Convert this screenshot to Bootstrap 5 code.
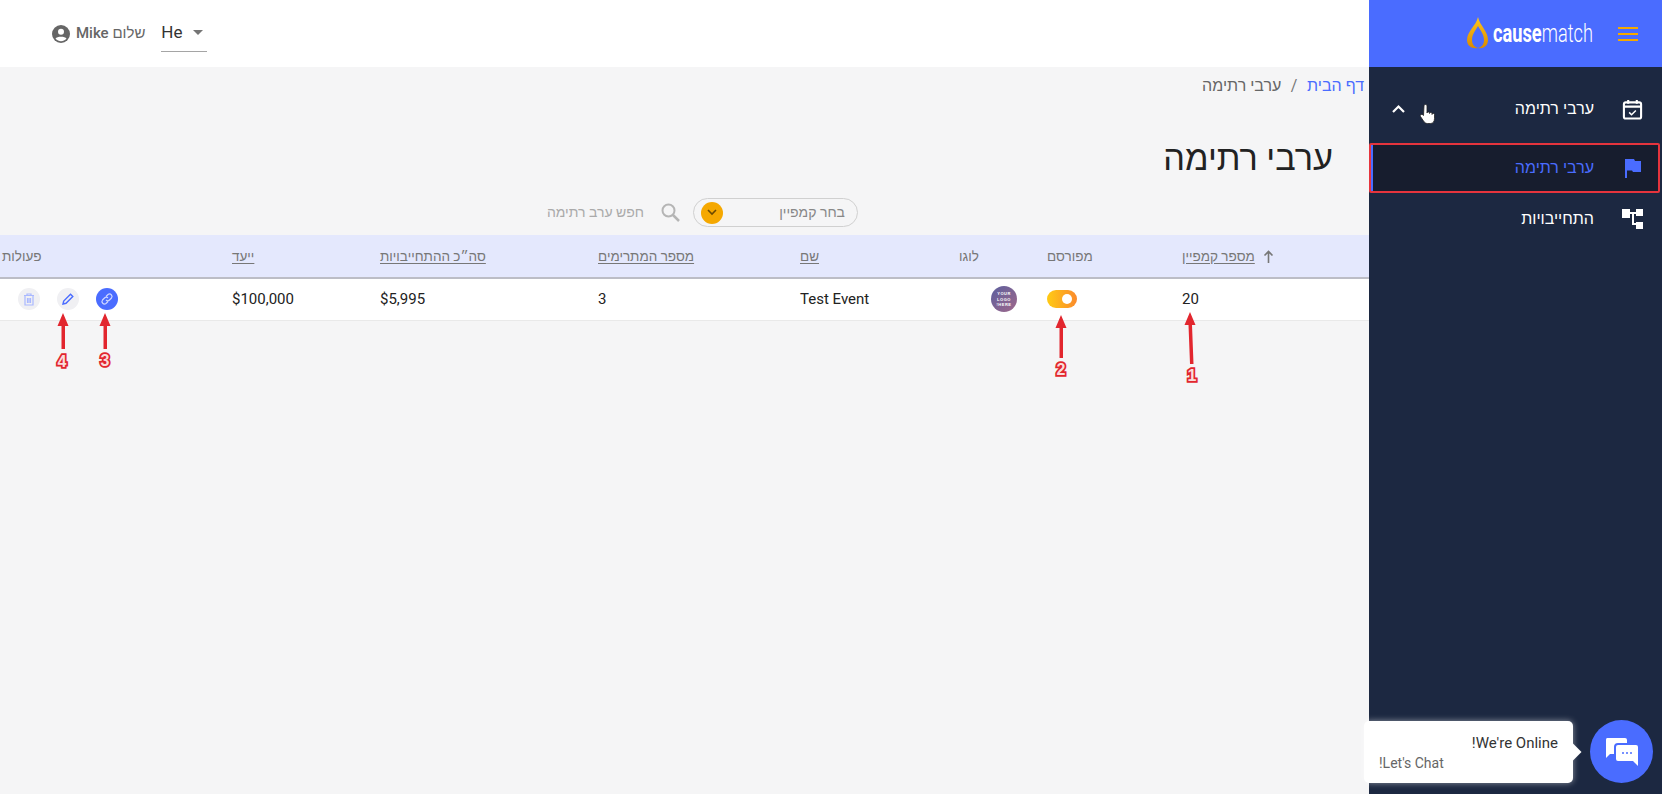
<!DOCTYPE html>
<html lang="he" dir="rtl">
<head>
    <meta charset="UTF-8">
    <title>ערבי רתימה</title>
    <link href="https://cdn.jsdelivr.net/npm/bootstrap@5.3.0/dist/css/bootstrap.min.css" rel="stylesheet">
    <style>
        body { background: #f5f5f6; font-family: Roboto, "Liberation Sans", sans-serif; height: 794px; overflow: hidden; position: relative; }
        .side-bar { width: 293px; height: 794px; background: #1c2841; flex-shrink: 0; }
        .side-head { height: 67px; background: #4a6cff; padding-right: 24px; gap: 25px; }
        .burger { width: 20px; }
        .burger i { display: block; height: 2px; background: #f5a800; margin: 4px 0; }
        .brand-logo { width: 126px; gap: 5px; }
        .brand-word { width: 100px; color: #fff; font-size: 25px; line-height: 30px; font-weight: 300; white-space: nowrap; transform: scaleX(.73); transform-origin: left center; }
        .brand-word b { font-weight: 700; }
        .side-nav { padding-top: 18px; }
        .side-nav .nav-link { height: 48px; color: #fff; font-size: 16px; font-weight: 500; padding: 0 19px 0 0; gap: 28px; }
        .side-nav .nav-link svg { width: 21px; height: 21px; flex-shrink: 0; }
        .side-nav .on-row { color: #4a6cff; background: #171d2e; height: 50px; margin: 10px 2px 2px 0; border: 2px solid #e5343d; border-radius: 2px; box-shadow: inset 2px 0 0 #4a6cff; padding-right: 15px; }
        .nav-chev { margin-right: auto; margin-left: 19px; }
        .main-area { width: 1369px; }
        .top-bar { height: 67px; background: #fff; padding-left: 52px; gap: 16px; }
        .lang-pick { width: 46px; height: 34px; border-bottom: 1px solid #a5a5a5; margin-top: 2px; color: #333; font-size: 17px; padding-bottom: 3px; }
        .lang-caret { width: 0; height: 0; border-left: 5px solid transparent; border-right: 5px solid transparent; border-top: 5px solid #757575; }
        .user-line { color: #666; font-size: 15px; gap: 6px; }
        .user-line b { font-weight: 500; }
        .crumbs { padding: 10px 5px 0 0; font-size: 16px; line-height: 18px; }
        .crumbs .breadcrumb { margin: 0; --bs-breadcrumb-divider-color: #777; }
        .crumbs a { color: #4a6cff; text-decoration: none; }
        .crumbs .breadcrumb-item.active { color: #666; }
        .crumbs .breadcrumb-item + .breadcrumb-item { padding-left: 0; padding-right: .6rem; }
        .crumbs .breadcrumb-item + .breadcrumb-item::before { float: right; padding-right: 0; padding-left: .6rem; }
        .page-title { font-size: 34.3px; font-weight: 400; color: #222; line-height: 44px; margin: 41px 36px 0 0; }
        .tools { padding: 18px 511px 0 0; height: 55px; gap: 13px; }
        .camp-pick { width: 165px; height: 29px; border: 1.5px solid #d0d0d0; border-radius: 15px; color: #888; font-size: 14px; padding: 0 12px 0 7px; }
        .camp-arrow { width: 22px; height: 22px; border-radius: 50%; background: #f5a800; }
        .find-box { color: #aaa; font-size: 14px; gap: 17px; }
        .event-table { width: 1369px; table-layout: fixed; border-collapse: collapse; margin: 0; }
        .event-table th { height: 43px; background: #e4e8fd; border-bottom: 2px solid #bcbdc6; color: #777; font-size: 13.5px; font-weight: 500; text-align: left; padding: 0; white-space: nowrap; }
        .event-table th:last-child { padding-left: 2px; }
        .event-table th u { text-underline-offset: 2px; }
        .event-table td { height: 42px; background: #fff; border-bottom: 1px solid #e9e9e9; color: #222; font-size: 15px; text-align: left; padding: 0; vertical-align: middle; }
        .sort-mark { margin-left: 8px; vertical-align: -2px; }
        .pub-switch { display: block; width: 30px; height: 18px; margin-right: auto; border-radius: 9px; background: linear-gradient(90deg, #ffcb14, #fb8a2c); position: relative; }
        .pub-switch i { position: absolute; width: 10px; height: 10px; border-radius: 50%; background: #fff; left: 15px; top: 4px; }
        .logo-cell svg { display: block; margin-left: 32px; margin-right: auto; }
        .act-row { gap: 17px; padding-left: 18px; }
        .act-btn { width: 22px; height: 22px; border-radius: 50%; background: #f0f0f3; }
        .act-btn.main-act { background: #4a6cff; }
        .marks { position: absolute; left: 0; top: 0; width: 1662px; height: 794px; pointer-events: none; direction: ltr; }
        .marks text { font-family: "Liberation Sans", sans-serif; font-size: 16px; font-weight: 700; fill: #f9dcdc; stroke: #e2262e; stroke-width: 3.5px; paint-order: stroke; text-anchor: middle; }
        .chat-tip { position: absolute; left: 1364px; top: 721px; width: 209px; height: 62px; background: #fff; border-radius: 5px; box-shadow: 0 0 6px rgba(255,255,255,.5); padding: 12px 15px; }
        .chat-tip::after { content: ""; position: absolute; right: -6px; top: 25px; width: 12px; height: 12px; background: #fff; transform: rotate(45deg); }
        .chat-title { color: #333; font-size: 15px; line-height: 20px; }
        .chat-sub { color: #666; font-size: 14px; line-height: 20px; margin-top: 0; }
        .chat-ball { position: absolute; left: 1590px; top: 720px; width: 63px; height: 63px; border-radius: 50%; background: #4a6cff; }
    </style>
</head>
<body class="d-flex">
<aside class="side-bar">
    <div class="side-head d-flex align-items-center">
        <div class="burger"><i></i><i></i><i></i></div>
        <div class="brand-logo d-flex align-items-center" dir="ltr">
            <svg width="21" height="40" viewBox="0 0 21 40" class="flex-shrink-0">
                <defs><linearGradient id="flameFill" x1="0" y1="0" x2="0" y2="1"><stop offset="0" stop-color="#ffc61a"/><stop offset="1" stop-color="#d98a00"/></linearGradient></defs>
                <path d="M11 3 C13 12 21 17 21 26 C21 32 16 35 11 34 C15 33 17 30 17 26 C17 20 13 16 11 12 C9 16 5 20 5 26 C5 30 7 33 11 34 C5 35 0 32 0 26 C0 17 9 12 11 3 Z" fill="url(#flameFill)"/>
            </svg>
            <div class="brand-word"><b>cause</b>match</div>
        </div>
    </div>
    <nav class="nav flex-column side-nav">
        <a class="nav-link d-flex align-items-center" href="#">
            <svg viewBox="0 0 21 22" fill="none" stroke="#fff" stroke-width="2.200"><rect x="1.500" y="3.500" width="18" height="17" rx="2"/><path d="M1.500 8h18M6 1v4M15 1v4"/><path d="M7 14l2.500 2.500L14 12" stroke-width="1.600"/></svg>
            <span>ערבי רתימה</span>
            <svg class="nav-chev" viewBox="0 0 21 21" fill="none" stroke="#fff" stroke-width="2.200"><path d="M5 13l5.500-5.500L16 13"/></svg>
        </a>
        <a class="nav-link on-row d-flex align-items-center" href="#">
            <svg viewBox="0 0 21 21" fill="#4a6cff"><path d="M3 1h9l1 2h6v11h-8l-1-1.500H5V20H3Z"/></svg>
            <span>ערבי רתימה</span>
        </a>
        <a class="nav-link d-flex align-items-center" href="#">
            <svg viewBox="0 0 21 21" fill="#fff"><path d="M0 0h8v9H0ZM14 0h7v7h-7ZM14 13h7v7h-7ZM8 3h6v2h-2v9h2v2h-4V5H8Z"/></svg>
            <span>התחייבויות</span>
        </a>
    </nav>
</aside>
<main class="main-area">
    <header class="top-bar d-flex align-items-center justify-content-end">
        <div class="lang-pick d-flex align-items-center justify-content-between" dir="ltr"><span>He</span><span class="lang-caret me-1"></span></div>
        <div class="user-line d-flex align-items-center">
            <span>שלום <b>Mike</b></span>
            <svg width="18" height="18" viewBox="0 0 18 18"><circle cx="9" cy="9" r="9" fill="#666"/><circle cx="9" cy="6.700" r="3" fill="#fff"/><path d="M3.500 13.500C5 11.300 13 11.300 14.500 13.500C13 15.500 11 16.200 9 16.200S5 15.500 3.500 13.500Z" fill="#fff"/></svg>
        </div>
    </header>
    <div class="crumbs">
        <ol class="breadcrumb">
            <li class="breadcrumb-item"><a href="#">דף הבית</a></li>
            <li class="breadcrumb-item active">ערבי רתימה</li>
        </ol>
    </div>
    <h1 class="page-title">ערבי רתימה</h1>
    <div class="tools d-flex align-items-start">
        <div class="camp-pick d-flex align-items-center justify-content-between">
            <span>בחר קמפיין</span>
            <span class="camp-arrow d-flex align-items-center justify-content-center"><svg width="10" height="7" viewBox="0 0 10 7" fill="none" stroke="#6b4a00" stroke-width="1.600"><path d="M1 1l4 4 4-4"/></svg></span>
        </div>
        <div class="find-box d-flex align-items-center pt-1">
            <svg width="19" height="19" viewBox="0 0 19 19" fill="none" stroke="#b5b5b5" stroke-width="2"><circle cx="7.500" cy="7.500" r="6"/><path d="M12 12l6 6" stroke-width="2.500"/></svg>
            <span>חפש ערב רתימה</span>
        </div>
    </div>
    <table class="event-table">
        <colgroup>
            <col style="width:187px"><col style="width:135px"><col style="width:88px"><col style="width:159px"><col style="width:202px"><col style="width:218px"><col style="width:148px"><col style="width:232px">
        </colgroup>
        <thead>
            <tr>
                <th><svg class="sort-mark" width="11" height="13" viewBox="0 0 11 13" fill="none" stroke="#777" stroke-width="1.600"><path d="M5.500 13V2M1.500 5.500l4-4 4 4"/></svg><u>מספר קמפיין</u></th>
                <th>מפורסם</th>
                <th>לוגו</th>
                <th><u>שם</u></th>
                <th><u>מספר המתרימים</u></th>
                <th><u>סה״כ ההתחייבויות</u></th>
                <th><u>ייעד</u></th>
                <th>פעולות</th>
            </tr>
        </thead>
        <tbody>
            <tr>
                <td>20</td>
                <td><span class="pub-switch"><i></i></span></td>
                <td class="logo-cell">
                    <svg width="26" height="26" viewBox="0 0 26 26">
                        <defs><linearGradient id="logoFill" x1="0" y1="0" x2="1" y2="1"><stop offset="0" stop-color="#5b5f9e"/><stop offset="1" stop-color="#a0688a"/></linearGradient></defs>
                        <circle cx="13" cy="13" r="13" fill="url(#logoFill)"/>
                        <g font-size="4" font-weight="700" fill="#fff" text-anchor="middle" font-family="Liberation Sans" letter-spacing=".5">
                            <text x="13" y="9">YOUR</text>
                            <text x="13" y="14.500">LOGO</text>
                            <text x="13" y="20">HERE!</text>
                        </g>
                    </svg>
                </td>
                <td dir="ltr">Test Event</td>
                <td>3</td>
                <td>$5,995</td>
                <td>$100,000</td>
                <td>
                    <div class="act-row d-flex" dir="ltr">
                        <span class="act-btn d-flex align-items-center justify-content-center">
                            <svg width="12" height="13" viewBox="0 0 12 13" fill="none" stroke="#a9b8ff" stroke-width="1.200"><path d="M1 2.500h10M4 2.500V1h4v1.500M2 2.500v9.500h8V2.500M4.500 5v5M6 5v5M7.500 5v5"/></svg>
                        </span>
                        <span class="act-btn d-flex align-items-center justify-content-center">
                            <svg width="12" height="12" viewBox="0 0 12 12" fill="none" stroke="#4a6cff" stroke-width="1.400"><path d="M1 11l.7-3L8.500 1.200l2.300 2.300L4 10.300Z"/></svg>
                        </span>
                        <span class="act-btn main-act d-flex align-items-center justify-content-center">
                            <svg width="14" height="14" viewBox="0 0 14 14" fill="none" stroke="#cdd6ff" stroke-width="1.200"><path d="M6 4.500l2-2a2.500 2.500 0 0 1 3.500 3.500l-2 2a2.500 2.500 0 0 1-3.500 0M8 9.500l-2 2A2.500 2.500 0 0 1 2.500 8l2-2a2.500 2.500 0 0 1 3.500 0"/></svg>
                        </span>
                    </div>
                </td>
            </tr>
        </tbody>
    </table>
</main>
<svg class="marks" viewBox="0 0 1662 794">
    <g fill="#e2262e" stroke="none">
        <path d="M1190 312l5.500 13h-3.500l1.500 39h-3.500l-1.500-39H1184.500Z"/>
        <path d="M1061 315l5.500 13h-3.500v30h-3.500v-30H1055.500Z"/>
        <path d="M105 313l5.500 13h-3.500v23h-3.500v-23H99.500Z"/>
        <path d="M63 313l5.500 13h-3.500v23h-3.500v-23H57.500Z"/>
    </g>
    <text x="1192" y="381">1</text>
    <text x="1061" y="375">2</text>
    <text x="105" y="366">3</text>
    <text x="62" y="367">4</text>
    <path d="M1424 106c0-2 3-2 3 0v7c0-1.500 2.500-1.500 2.500 0v.5c0-1.500 2.500-1.500 2.500 0v1c0-1.500 2.500-1.500 2.500 0v4c0 3-1.500 5-4 5h-3c-2 0-3-1-4-2.500l-3-4.500c-1-1.500 1-3 2.500-1.500l.5.5Z" fill="#fff" stroke="#222" stroke-width=".8"/>
</svg>
<div class="chat-tip" dir="rtl">
    <div class="chat-title">We're Online!</div>
    <div class="chat-sub text-start" dir="ltr">!Let's Chat</div>
</div>
<div class="chat-ball d-flex align-items-center justify-content-center">
    <svg width="34" height="30" viewBox="0 0 34 30"><path d="M2 1h18a2 2 0 0 1 2 2v3H13a4 4 0 0 0-4 4v7H5l-4 4V3a2 2 0 0 1 1-2Z" fill="#fff"/><path d="M13 8h18a2 2 0 0 1 2 2v19l-5-5H13a2 2 0 0 1-2-2V10a2 2 0 0 1 2-2Z" fill="#fff"/><g fill="#4a6cff"><circle cx="18" cy="16" r="1"/><circle cx="22" cy="16" r="1"/><circle cx="26" cy="16" r="1"/></g></svg>
</div>
</body>
</html>
